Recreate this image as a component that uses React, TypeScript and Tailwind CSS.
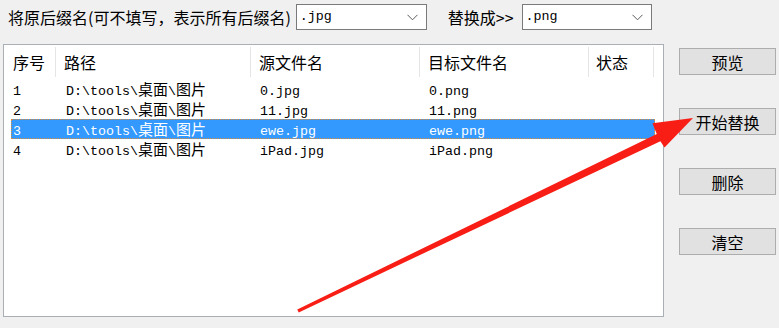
import React from "react"

const cjk = '"Noto Sans CJK SC", "Noto Sans", sans-serif'
const mono = '"Liberation Mono", "Noto Sans CJK SC", monospace'

const rows = [
  { no: "1", path: "D:\\tools\\桌面\\图片", src: "0.jpg", dst: "0.png" },
  { no: "2", path: "D:\\tools\\桌面\\图片", src: "11.jpg", dst: "11.png" },
  { no: "3", path: "D:\\tools\\桌面\\图片", src: "ewe.jpg", dst: "ewe.png", selected: true },
  { no: "4", path: "D:\\tools\\桌面\\图片", src: "iPad.jpg", dst: "iPad.png" },
]

// ascii glyphs half width, CJK glyphs full width, like SimSun
function Mixed({ text }: { text: string }) {
  const parts = text.split(/([\u4e00-\u9fff]+)/).filter(Boolean)
  return (
    <span className="whitespace-pre font-['Liberation_Mono'] text-[13.33px]">
      {parts.map((p, i) =>
        /[\u4e00-\u9fff]/.test(p) ? (
          <span key={i} className="font-['Noto_Sans_CJK_SC'] text-[15px]">
            {p}
          </span>
        ) : (
          <span key={i}>{p}</span>
        )
      )}
    </span>
  )
}

function Chevron() {
  return (
    <svg width="11" height="7" viewBox="0 0 11 7" className="shrink-0">
      <polyline points="0.5,0.8 5.5,5.8 10.5,0.8" fill="none" stroke="#5a5a5a" strokeWidth="1" />
    </svg>
  )
}

function Combo({ value, width }: { value: string; width: string }) {
  return (
    <div className={`${width} flex h-[26px] items-center justify-between border border-[#7a7a7a] bg-white pl-[3px] pr-[8px]`}>
      <span className="text-[13.33px] text-black" style={{ fontFamily: mono }}>
        {value}
      </span>
      <Chevron />
    </div>
  )
}

function Button({ label }: { label: string }) {
  return (
    <button className="flex h-[27px] w-[97px] items-center justify-center border border-[#adadad] bg-[#e1e1e1] text-[16px] text-black">
      {label}
    </button>
  )
}

export default function App() {
  return (
    <div className="relative h-[328px] w-[779px] overflow-hidden bg-[#f0f0f0] text-black" style={{ fontFamily: cjk }}>
      <div className="flex items-center pl-[8px] pt-[4px]">
        <span className="text-[16px] leading-none">将原后缀名(可不填写，表示所有后缀名)</span>
        <div className="ml-[5px]">
          <Combo value=".jpg" width="w-[131px]" />
        </div>
        <span className="ml-[21px] text-[16px] leading-none">替换成&gt;&gt;</span>
        <div className="ml-[8px]">
          <Combo value=".png" width="w-[130px]" />
        </div>
      </div>

      <div className="mt-[14px] flex">
        <div className="ml-[3px] h-[273px] w-[661px] border border-[#a9afb4] bg-white">
          <div className="flex h-[34px] text-[16px]">
            <div className="mt-[2px] flex h-[30px] w-[52px] items-center border-r border-[#e5e5e5] pl-[9px]">序号</div>
            <div className="mt-[2px] flex h-[30px] w-[195px] items-center border-r border-[#e5e5e5] pl-[8px]">路径</div>
            <div className="mt-[2px] flex h-[30px] w-[169px] items-center border-r border-[#e5e5e5] pl-[8px]">源文件名</div>
            <div className="mt-[2px] flex h-[30px] w-[169px] items-center border-r border-[#e5e5e5] pl-[8px]">目标文件名</div>
            <div className="mt-[2px] flex h-[30px] w-[65px] items-center border-r border-[#e5e5e5] pl-[7px]">状态</div>
          </div>
          {rows.map((r) => (
            <div key={r.no} className="flex h-[20px]">
              <div
                className={`ml-[7px] flex h-[20px] w-[644px] items-center ${
                  r.selected ? "border border-dotted border-[#d98a3a] bg-[#3399ff] text-white" : "border border-transparent"
                }`}
              >
                <div className="w-[45px] pl-[1px]">
                  <Mixed text={r.no} />
                </div>
                <div className="w-[195px] pl-[9px]">
                  <Mixed text={r.path} />
                </div>
                <div className="w-[169px] pl-[8px]">
                  <Mixed text={r.src} />
                </div>
                <div className="w-[169px] pl-[8px]">
                  <Mixed text={r.dst} />
                </div>
              </div>
            </div>
          ))}
        </div>

        <div className="ml-[15px] mt-[4px] flex flex-col gap-[33px]">
          <Button label="预览" />
          <Button label="开始替换" />
          <Button label="删除" />
          <Button label="清空" />
        </div>
      </div>

      {/* red annotation arrow */}
      <svg className="pointer-events-none absolute left-0 top-0" width="779" height="328" viewBox="0 0 779 328">
        <polygon
          points="297.3,309.6 298.7,312.4 660.4,141.2 664.5,147.4 693,118 652.4,123.2 656.8,133.9"
          fill="#f81e16"
        />
      </svg>
    </div>
  )
}
